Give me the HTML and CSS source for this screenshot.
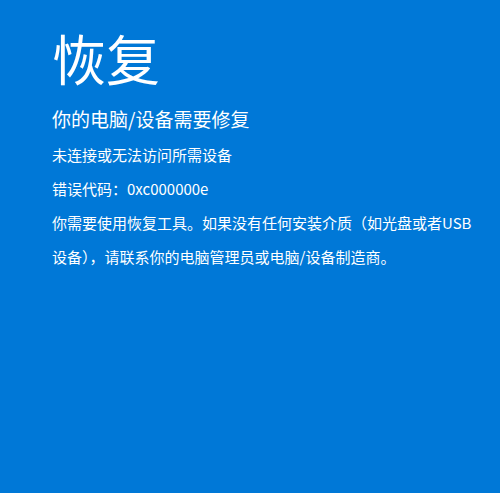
FILE: index.html
```html
<!DOCTYPE html>
<html lang="zh-CN">
<head>
<meta charset="utf-8">
<title>恢复</title>
<link rel="stylesheet" href="styles.css">
</head>
<body>
<main class="screen">
  <h1 class="title">恢复</h1>
  <h2 class="subtitle">你的电脑/设备需要修复</h2>
  <p class="line">未连接或无法访问所需设备</p>
  <p class="line">错误代码：0xc000000e</p>
  <p class="line">你需要使用恢复工具。如果没有任何安装介质（如光盘或者USB<br>设备），请联系你的电脑管理员或电脑/设备制造商。</p>
</main>
</body>
</html>
```
FILE: styles.css
```css
html, body {
  margin: 0;
  padding: 0;
  height: 100%;
  background: #0078d7;
}
body {
  color: #ffffff;
  font-family: "Noto Sans CJK SC", "Noto Sans", sans-serif;
}
.screen {
  padding: 23px 0 0 52px;
  display: flex;
  flex-direction: column;
}
.title {
  margin: 0;
  font-size: 54px;
  font-weight: 400;
  line-height: 70px;
}
.subtitle {
  margin: 11px 0 4px;
  font-size: 19px;
  font-weight: 400;
  line-height: 30px;
}
.line {
  margin: 0;
  font-size: 15px;
  line-height: 34px;
}
```
